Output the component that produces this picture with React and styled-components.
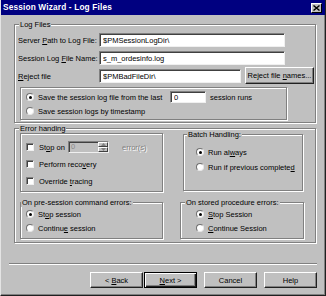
import React from 'react';
import styled, { createGlobalStyle, css } from 'styled-components';

const BG = '#c0c0c0';

const GlobalStyle = createGlobalStyle`
  html, body { margin: 0; padding: 0; background: ${BG}; }
  body { font-family: "Liberation Sans", Arial, sans-serif; }
`;

const Window = styled.div`
  box-sizing: border-box;
  width: 326px;
  height: 296px;
  background: ${BG};
  border-left: 1px solid #e4e4e4;
  border-right: 1px solid #202020;
  border-bottom: 1px solid #202020;
  box-shadow: inset -1px -1px 0 #808080;
  display: flex;
  flex-direction: column;
  font-family: "Liberation Sans", Arial, sans-serif;
  font-size: 7.5px;
  color: #000;
  overflow: hidden;
`;

const TitleBar = styled.div`
  flex: none;
  height: 15px;
  background: #000080;
  display: flex;
  align-items: center;
  justify-content: space-between;
  padding: 0 3px 0 2px;
`;

const Title = styled.span`
  color: #fff;
  font-weight: bold;
  font-size: 8.3px;
  letter-spacing: 0.15px;
  line-height: 15px;
`;

const CloseBox = styled.div`
  box-sizing: border-box;
  width: 11px;
  height: 10px;
  background: ${BG};
  border: 1px solid;
  border-color: #fff #000 #000 #fff;
  display: flex;
  align-items: center;
  justify-content: center;
`;

const Body = styled.div`
  flex: 1;
  display: flex;
  flex-direction: column;
  padding: 9px 8px 0 8px;
`;

const Group = styled.div`
  position: relative;
  box-sizing: border-box;
  flex: none;
  width: ${p => p.$w}px;
  border: 1px solid #808080;
  box-shadow: inset 1px 1px 0 #fff, 1px 1px 0 #fff;
  padding: ${p => p.$pad};
  margin: ${p => p.$m || '0'};
  display: flex;
  flex-direction: column;
  gap: ${p => p.$gap || 0}px;
`;

const BoxRow = styled.div`
  display: flex;
  align-items: flex-start;
  gap: ${p => p.$gap}px;
`;

const Legend = styled.span`
  position: absolute;
  top: -5px;
  left: ${p => p.$left}px;
  padding: 0 1px;
  background: ${BG};
  line-height: 9px;
  white-space: nowrap;
`;

const FieldRow = styled.div`
  display: flex;
  align-items: center;
  height: 14px;
`;

const FieldLabel = styled.span`
  width: 81px;
  flex: none;
  white-space: nowrap;
`;

const sunken = css`
  border: 1px solid;
  border-color: #808080 #f0f0f0 #f0f0f0 #808080;
  box-shadow: inset 1px 1px 0 #404040;
`;

const TextInput = styled.input`
  box-sizing: border-box;
  width: ${p => p.$w}px;
  height: ${p => p.$h || 14}px;
  margin: 0;
  padding: 0 0 0 3px;
  ${sunken}
  background: #fff;
  font-family: "Liberation Sans", Arial, sans-serif;
  font-size: 7.5px;
  color: #000;
  outline: none;
  flex: none;
`;

const Button = styled.button`
  box-sizing: border-box;
  flex: none;
  width: ${p => p.$w}px;
  height: ${p => p.$h}px;
  margin: ${p => p.$m || '0'};
  padding: 0;
  background: ${BG};
  font-family: "Liberation Sans", Arial, sans-serif;
  font-size: 7.5px;
  color: #000;
  border: 1px solid;
  border-color: #fff #202020 #202020 #fff;
  box-shadow: inset -1px -1px 0 #808080;
  ${p => p.$default && css`
    border-color: #000;
    box-shadow: inset 1px 1px 0 #fff, inset -1px -1px 0 #202020, inset -2px -2px 0 #808080;
  `}
`;

const OptionRow = styled.div`
  display: flex;
  align-items: center;
  height: 12px;
  white-space: nowrap;
`;

const Radio = styled.span`
  box-sizing: border-box;
  flex: none;
  width: 8px;
  height: 8px;
  margin-right: 4px;
  border-radius: 50%;
  background: #fff;
  border: 1px solid;
  border-color: #707070 #e8e8e8 #e8e8e8 #707070;
  display: flex;
  align-items: center;
  justify-content: center;
  &::after {
    content: '';
    display: ${p => (p.$on ? 'block' : 'none')};
    width: 3px;
    height: 3px;
    border-radius: 50%;
    background: #000;
  }
`;

const Checkbox = styled.span`
  box-sizing: border-box;
  flex: none;
  width: 8px;
  height: 8px;
  margin-right: 5px;
  background: #fff;
  ${sunken}
`;

const RadioText = styled.span`
  width: ${p => (p.$w ? `${p.$w}px` : 'auto')};
  flex: none;
`;

const Suffix = styled.span`
  margin-left: 4px;
`;

const Key = styled.span`
  text-decoration: underline;
`;

const StopLabel = styled.span`
  width: 29px;
  flex: none;
`;

const Spinner = styled.div`
  box-sizing: border-box;
  flex: none;
  width: 41px;
  height: 12px;
  display: flex;
  ${sunken}
  background: ${BG};
`;

const SpinValue = styled.span`
  flex: 1;
  color: #8a8a8a;
  padding-left: 2px;
  line-height: 10px;
`;

const SpinButtons = styled.div`
  width: 10px;
  display: flex;
  flex-direction: column;
`;

const SpinBtn = styled.div`
  box-sizing: border-box;
  flex: 1;
  border: 1px solid;
  border-color: #fff #404040 #404040 #fff;
  display: flex;
  align-items: center;
  justify-content: center;
`;

const Disabled = styled.span`
  margin-left: 13px;
  color: #808080;
  text-shadow: 1px 1px 0 #fff;
`;

const Separator = styled.div`
  flex: none;
  height: 0;
  margin-top: 20px;
  border-top: 1px solid #808080;
  border-bottom: 1px solid #fff;
`;

const Footer = styled.div`
  display: flex;
  justify-content: flex-end;
  margin-top: 7px;
`;

const Arrow = ({ up }) => (
  <svg width="5" height="3" viewBox="0 0 5 3">
    <polygon points={up ? '0,3 5,3 2.5,0' : '0,0 5,0 2.5,3'} fill="#808080" />
  </svg>
);

export default function App() {
  return (
    <>
      <GlobalStyle />
      <Window>
        <TitleBar>
          <Title>Session Wizard - Log Files</Title>
          <CloseBox>
            <svg width="7" height="6" viewBox="0 0 7 6">
              <path d="M0.5 0.5 L6.5 5.5 M6.5 0.5 L0.5 5.5" stroke="#000" strokeWidth="1.4" />
            </svg>
          </CloseBox>
        </TitleBar>
        <Body>
          <Group $w={302} $m="0 0 0 5px" $pad="8px 0 2px 3px" $gap={4}>
            <Legend $left={4}>Log Files</Legend>
            <FieldRow>
              <FieldLabel>Server <Key>P</Key>ath to Log File:</FieldLabel>
              <TextInput $w={186} readOnly defaultValue="$PMSessionLogDir\" />
            </FieldRow>
            <FieldRow>
              <FieldLabel>Session Log <Key>F</Key>ile Name:</FieldLabel>
              <TextInput $w={186} readOnly defaultValue="s_m_ordesinfo.log" />
            </FieldRow>
            <FieldRow>
              <FieldLabel><Key>R</Key>eject file</FieldLabel>
              <TextInput $w={142} readOnly defaultValue="$PMBadFileDir\" />
              <Button $w={69} $h={17} $m="-2px 0 -1px 4px">Reject file <Key>n</Key>ames...</Button>
            </FieldRow>
            <Group $w={267} $m="0 0 0 2px" $pad="3px 0 2px 5px" $gap={2}>
              <OptionRow>
                <Radio $on />
                <RadioText $w={132}>Save the session log file from the last</RadioText>
                <TextInput $w={36} $h={12} readOnly defaultValue="0" />
                <Suffix>session runs</Suffix>
              </OptionRow>
              <OptionRow>
                <Radio />
                <RadioText>Save session logs by timestamp</RadioText>
              </OptionRow>
            </Group>
          </Group>

          <Group $w={302} $m="5px 0 0 5px" $pad="4px 0 3px 5px" $gap={10}>
            <Legend $left={4}>Error handing</Legend>
            <BoxRow $gap={20}>
              <Group $w={143} $pad="7px 0 4px 5px" $gap={5}>
                <OptionRow>
                  <Checkbox />
                  <StopLabel>St<Key>o</Key>p on</StopLabel>
                  <Spinner>
                    <SpinValue>0</SpinValue>
                    <SpinButtons>
                      <SpinBtn><Arrow up /></SpinBtn>
                      <SpinBtn><Arrow /></SpinBtn>
                    </SpinButtons>
                  </Spinner>
                  <Disabled>error(s)</Disabled>
                </OptionRow>
                <OptionRow>
                  <Checkbox />
                  <span>Perform reco<Key>v</Key>ery</span>
                </OptionRow>
                <OptionRow>
                  <Checkbox />
                  <span>Override <Key>t</Key>racing</span>
                </OptionRow>
              </Group>
              <Group $w={120} $m="1px 0 0 0" $pad="11px 0 17px 12px" $gap={3}>
                <Legend $left={3}>Batch Handling:</Legend>
                <OptionRow>
                  <Radio $on />
                  <span>Run al<Key>w</Key>ays</span>
                </OptionRow>
                <OptionRow>
                  <Radio />
                  <span>Run if previous complete<Key>d</Key></span>
                </OptionRow>
              </Group>
            </BoxRow>
            <BoxRow $gap={17}>
              <Group $w={143} $pad="5px 0 4px 5px" $gap={2}>
                <Legend $left={0}>On pre-session command errors:</Legend>
                <OptionRow>
                  <Radio $on />
                  <span>St<Key>o</Key>p session</span>
                </OptionRow>
                <OptionRow>
                  <Radio />
                  <span>Continu<Key>e</Key> session</span>
                </OptionRow>
              </Group>
              <Group $w={124} $pad="5px 0 4px 15px" $gap={2}>
                <Legend $left={4}>On stored procedure errors:</Legend>
                <OptionRow>
                  <Radio $on />
                  <span><Key>S</Key>top Session</span>
                </OptionRow>
                <OptionRow>
                  <Radio />
                  <span><Key>C</Key>ontinue Session</span>
                </OptionRow>
              </Group>
            </BoxRow>
          </Group>

          <Separator />
          <Footer>
            <Button $w={53} $h={16}>&lt; <Key>B</Key>ack</Button>
            <Button $w={53} $h={16} $m="0 0 0 1px" $default><Key>N</Key>ext &gt;</Button>
            <Button $w={53} $h={16} $m="0 0 0 7px">Cancel</Button>
            <Button $w={53} $h={16} $m="0 0 0 7px">Help</Button>
          </Footer>
        </Body>
      </Window>
    </>
  );
}
